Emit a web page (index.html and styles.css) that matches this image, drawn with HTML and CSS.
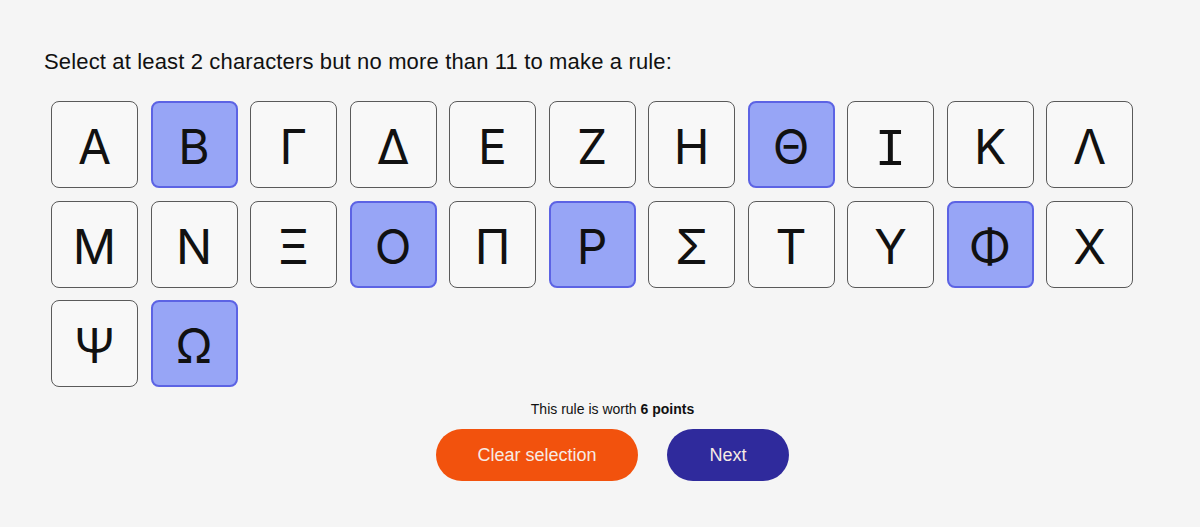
FILE: index.html
```html
<!DOCTYPE html>
<html>
<head>
<meta charset="utf-8">
<link rel="stylesheet" href="styles.css">
</head>
<body>
<main class="page">
  <p class="prompt">Select at least 2 characters but no more than 11 to make a rule:</p>
  <div class="grid">
    <button class="tile">Α</button>
    <button class="tile selected">Β</button>
    <button class="tile">Γ</button>
    <button class="tile">Δ</button>
    <button class="tile">Ε</button>
    <button class="tile">Ζ</button>
    <button class="tile">Η</button>
    <button class="tile selected">Θ</button>
    <button class="tile iota">Ι</button>
    <button class="tile">Κ</button>
    <button class="tile">Λ</button>
    <button class="tile">Μ</button>
    <button class="tile">Ν</button>
    <button class="tile">Ξ</button>
    <button class="tile selected">Ο</button>
    <button class="tile">Π</button>
    <button class="tile selected">Ρ</button>
    <button class="tile">Σ</button>
    <button class="tile">Τ</button>
    <button class="tile">Υ</button>
    <button class="tile selected">Φ</button>
    <button class="tile">Χ</button>
    <button class="tile">Ψ</button>
    <button class="tile selected">Ω</button>
  </div>
  <div class="footer">
    <p class="worth">This rule is worth <b>6 points</b></p>
    <div class="actions">
      <button class="btn clear">Clear selection</button>
      <button class="btn next">Next</button>
    </div>
  </div>
</main>
</body>
</html>
```
FILE: styles.css
```css
html, body {
  margin: 0;
  padding: 0;
  background: #f5f5f5;
}
body {
  font-family: "Liberation Sans", Arial, sans-serif;
  color: #111;
}
.page {
  padding: 49px 0 0 44px;
  width: 1100px;
}
.prompt {
  margin: 0;
  font-size: 22px;
  line-height: 26px;
  letter-spacing: 0.15px;
}
.grid {
  margin-top: 26px;
  margin-left: 7px;
  display: grid;
  grid-template-columns: repeat(11, 87px);
  grid-auto-rows: 87px;
  column-gap: 12.5px;
  row-gap: 12.5px;
}
.tile {
  box-sizing: border-box;
  width: 87px;
  height: 87px;
  border: 1px solid #5a5a5a;
  border-radius: 8px;
  background: #f8f8f8;
  font-family: Inter, "Liberation Sans", sans-serif;
  font-weight: 400;
  font-size: 48px;
  color: #111;
  display: flex;
  align-items: center;
  justify-content: center;
  padding: 4px 0 0 0;
}
.tile.iota {
  font-family: "Liberation Mono", monospace;
  font-size: 53px;
  padding-top: 14px;
}
.tile.selected {
  background: #97a5f6;
  border: 2px solid #5c63e4;
}
.footer {
  margin-top: 13px;
  margin-left: 392px;
  width: 353px;
  display: flex;
  flex-direction: column;
  align-items: center;
}
.worth {
  margin: 0;
  font-size: 14px;
  line-height: 18px;
}
.actions {
  margin-top: 11px;
  display: flex;
  gap: 29px;
}
.btn {
  height: 52px;
  border: none;
  border-radius: 26px;
  font-family: "Liberation Sans", Arial, sans-serif;
  font-size: 18px;
  color: #f7ebe4;
}
.clear {
  width: 202px;
  background: #f2520d;
}
.next {
  width: 122px;
  background: #2f2a9c;
}
```
